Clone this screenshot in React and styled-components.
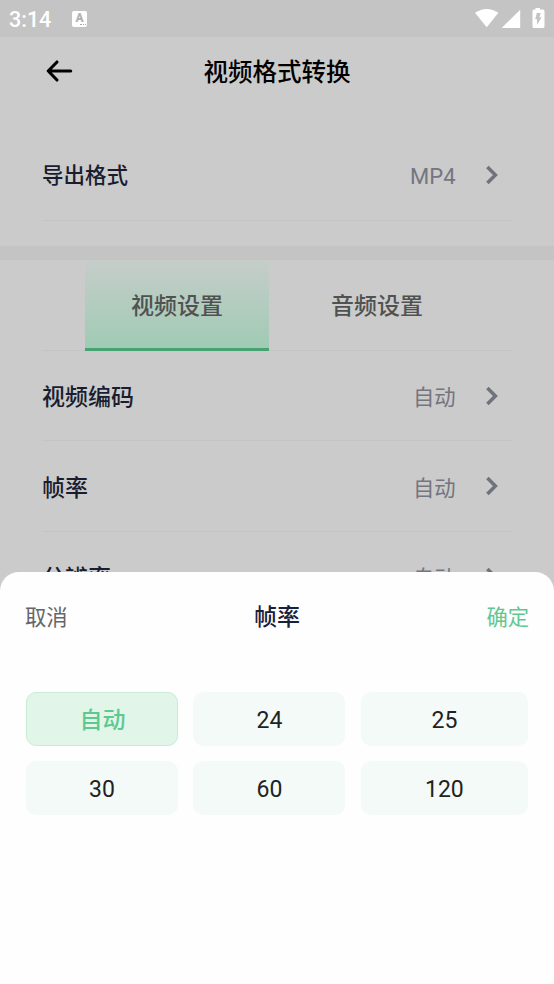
import React, { useState } from 'react';
import styled, { createGlobalStyle } from 'styled-components';

const rates = ['自动', '24', '25', '30', '60', '120'];

const settings = [
  { label: '视频编码', value: '自动' },
  { label: '帧率', value: '自动' },
  { label: '分辨率', value: '自动' },
];

const Chevron = () => (
  <ChevronIcon viewBox="0 0 14 22">
    <path d="M2.4 3 L10.4 11 L2.4 19" />
  </ChevronIcon>
);

const StatusBar = () => (
  <Status>
    <Clock>3:14</Clock>
    <Badge>
      <b>A</b>
      <i />
    </Badge>
    <StatusIcons viewBox="0 0 70 22">
      <path d="M0 4.8 Q11.7 -2.8 23.4 4.8 L11.7 19.2 Z" />
      <path d="M45.2 1.8 V20 H27.4 V19.2 Z" />
      <path d="M60.5 0 h4.5 v1.6 h3 q1.5 0 1.5 1.5 v15.4 q0 1.5 -1.5 1.5 h-9 q-1.5 0 -1.5 -1.5 v-15.4 q0 -1.5 1.5 -1.5 h1.5 z" />
      <path className="bolt" d="M61.8 5 h4 l-1.4 4.3 h2.2 l-4.6 7.8 v-5.8 h-1.8 z" />
    </StatusIcons>
  </Status>
);

const App = () => {
  const [tab, setTab] = useState('视频设置');
  const [rate, setRate] = useState('自动');

  return (
    <Screen>
      <GlobalStyle />
      <StatusBar />
      <Header>
        <BackIcon viewBox="0 0 28 24">
          <path d="M12 3 L3.2 12 L12 21 M3.5 12 H25.7" />
        </BackIcon>
        <Title>视频格式转换</Title>
      </Header>

      <Section $first>
        <Row $tall>
          <Label $small>导出格式</Label>
          <Value $latin>MP4</Value>
          <Chevron />
        </Row>
      </Section>
      <Divider />

      <Section>
        <Tabs>
          {['视频设置', '音频设置'].map((name) => (
            <Tab key={name} $active={tab === name} onClick={() => setTab(name)}>
              {name}
            </Tab>
          ))}
        </Tabs>
        {settings.map(({ label, value }) => (
          <Row key={label}>
            <Label>{label}</Label>
            <Value>{value}</Value>
            <Chevron />
          </Row>
        ))}
      </Section>

      <Sheet>
        <SheetHeader>
          <Action>取消</Action>
          <SheetTitle>帧率</SheetTitle>
          <Action $primary>确定</Action>
        </SheetHeader>
        <Options>
          {rates.map((item) => (
            <Option key={item} $active={rate === item} onClick={() => setRate(item)}>
              {item}
            </Option>
          ))}
        </Options>
      </Sheet>
    </Screen>
  );
};

const GlobalStyle = createGlobalStyle`
  * {
    box-sizing: border-box;
  }

  body {
    margin: 0;
  }

  button {
    padding: 0;
    border: 0;
    background: none;
    font-family: inherit;
    cursor: pointer;
  }
`;

const Screen = styled.div`
  position: relative;
  width: 554px;
  height: 984px;
  overflow: hidden;
  background: #cbcbcb;
  font-family: Roboto, 'Noto Sans CJK SC', sans-serif;
`;

const Status = styled.div`
  display: flex;
  align-items: center;
  height: 37px;
  padding: 0 9px;
  background: #c4c4c4;
`;

const Clock = styled.span`
  width: 63px;
  padding-top: 2px;
  color: #fff;
  font-size: 21.5px;
  font-weight: 500;
  line-height: 37px;
`;

const Badge = styled.span`
  display: flex;
  flex-direction: column;
  align-items: center;
  width: 15px;
  height: 16px;
  border-radius: 2px;
  background: #fff;

  b {
    color: #b4b4b4;
    font-size: 12px;
    font-weight: 900;
    line-height: 14px;
  }

  i {
    width: 6px;
    margin: -1px 1px 0 auto;
    border-top: 1px dotted #aaa;
  }
`;

const StatusIcons = styled.svg`
  width: 70px;
  height: 22px;
  margin: 1px 0 0 auto;
  fill: #fff;

  .bolt {
    fill: #c4c4c4;
  }
`;

const Header = styled.header`
  display: grid;
  grid-template-columns: 28px 1fr 28px;
  align-items: center;
  height: 68px;
  padding: 0 45px;
`;

const BackIcon = styled.svg`
  width: 28px;
  height: 24px;
  fill: none;
  stroke: #000;
  stroke-width: 3.1;
  stroke-linecap: round;
  stroke-linejoin: round;
`;

const Title = styled.h1`
  margin: 0;
  padding-top: 3px;
  color: #000;
  font-size: 24.5px;
  font-weight: 500;
  line-height: 36px;
  text-align: center;
`;

const Section = styled.section`
  padding: ${({ $first }) => ($first ? '26px 42px 25px' : '0 42px')};
`;

const Row = styled.div`
  display: flex;
  align-items: center;
  height: ${({ $tall }) => ($tall ? '90px' : '90.5px')};
  padding-top: ${({ $tall }) => ($tall ? 0 : '2px')};
  border-bottom: 1px solid #c4c4c4;
`;

const Label = styled.span`
  flex: 1;
  padding-top: ${({ $small }) => ($small ? '1px' : '4px')};
  color: #191d30;
  font-size: ${({ $small }) => ($small ? '21.5px' : '23px')};
  font-weight: 500;
  line-height: 34px;
`;

const Value = styled.span`
  margin-right: 29.5px;
  padding-top: ${({ $latin }) => ($latin ? '2px' : '4px')};
  color: #74757f;
  font-size: ${({ $latin }) => ($latin ? '22px' : '21.3px')};
  line-height: 32px;
`;

const ChevronIcon = styled.svg`
  width: 14px;
  height: 22px;
  margin: -1px 13px 0 0;
  fill: none;
  stroke: #70727c;
  stroke-width: 3.5;
`;

const Divider = styled.div`
  height: 14px;
  background: #c4c4c4;
`;

const Tabs = styled.div`
  display: flex;
  justify-content: center;
  gap: 16px;
  height: 90.5px;
  box-shadow: inset 0 -1px #c4c4c4;
`;

const Tab = styled.button`
  width: 184px;
  height: 91px;
  border-bottom: 3px solid ${({ $active }) => ($active ? '#46a371' : 'transparent')};
  background: ${({ $active }) => ($active ? 'linear-gradient(#c6cdca, #a0cbb4) padding-box' : 'none')};
  color: #505251;
  font-size: 23px;
  font-weight: 500;
`;

const Sheet = styled.div`
  position: absolute;
  right: 0;
  bottom: 0;
  left: 0;
  height: 412px;
  padding: 0 26px;
  border-radius: 19px 19px 0 0;
  background: #fefefe;
`;

const SheetHeader = styled.div`
  display: flex;
  align-items: center;
  justify-content: space-between;
  height: 86px;
  margin: 0 -1px 34px;
`;

const SheetTitle = styled.h2`
  margin: 0;
  color: #19203a;
  font-size: 23px;
  font-weight: 500;
`;

const Action = styled.button`
  color: ${({ $primary }) => ($primary ? '#5dc991' : '#666')};
  font-size: 21.3px;
`;

const Options = styled.div`
  display: grid;
  grid-template-columns: 152px 152px 1fr;
  grid-auto-rows: 54px;
  gap: 15px 15.4px;
`;

const Option = styled.button`
  padding: ${({ $active }) => ($active ? '0 0 2px 1px' : '2px 0 0')};
  border: 1.5px solid ${({ $active }) => ($active ? '#c9ecd9' : 'transparent')};
  border-radius: 10px;
  background: ${({ $active }) => ($active ? '#e1f5e9' : '#f4faf8')};
  color: ${({ $active }) => ($active ? '#5dc991' : '#222')};
  font-size: 23px;
  font-weight: ${({ $active }) => ($active ? 500 : 400)};
`;

export default App;
